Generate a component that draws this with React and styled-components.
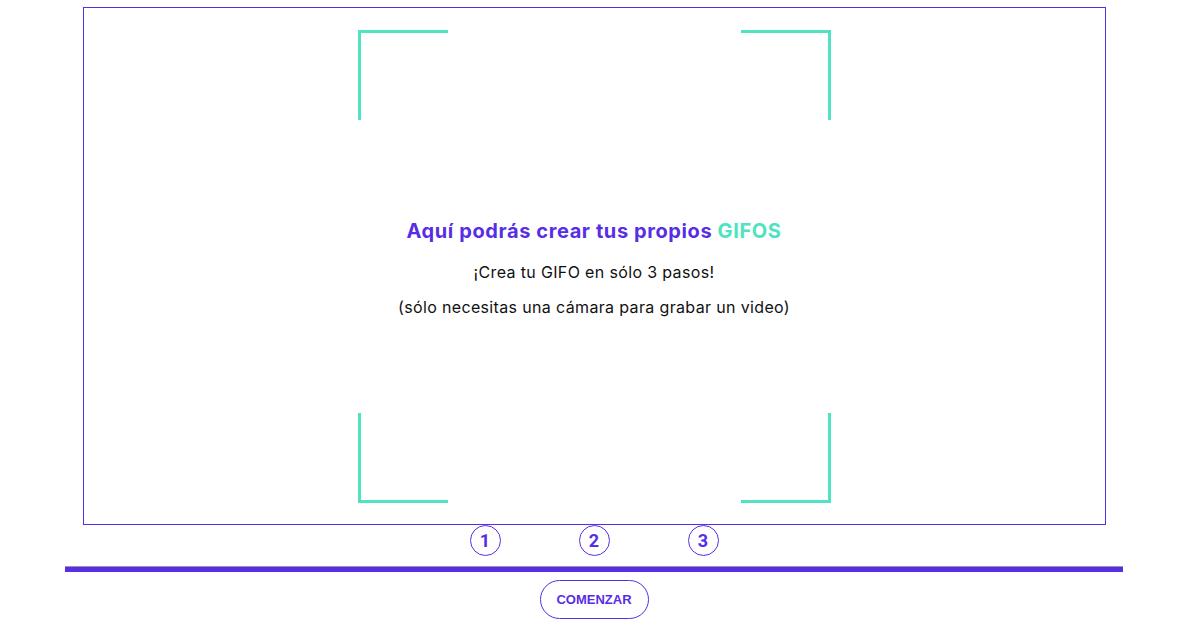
import React from "react";
import styled, { createGlobalStyle } from "styled-components";

const purple = "#572ee5";
const teal = "#50e3c2";

const Global = createGlobalStyle`
  body {
    margin: 0;
    background: #fff;
    font-family: "Liberation Sans", Arial, sans-serif;
  }
`;

const Page = styled.main`
  width: 1188px;
  display: flex;
  flex-direction: column;
  align-items: center;
`;

const Stage = styled.section`
  box-sizing: border-box;
  width: 1023px;
  height: 518px;
  margin-top: 7px;
  border: 1px solid ${purple};
  display: flex;
  align-items: center;
  justify-content: center;
`;

const Frame = styled.div`
  width: 473px;
  height: 473px;
  display: flex;
  flex-direction: column;
`;

const CornerRow = styled.div`
  display: flex;
  justify-content: space-between;
`;

const Corner = styled.span`
  box-sizing: border-box;
  width: 90px;
  height: 90px;
  border: 0 solid ${teal};
  border-${(p) => p.$v}-width: 3px;
  border-${(p) => p.$h}-width: 3px;
`;

const Intro = styled.div`
  flex: 1;
  display: flex;
  flex-direction: column;
  align-items: center;
  justify-content: center;
  padding-top: 4px;
  font-family: "Inter", "Open Sans", sans-serif;
  color: #111;
`;

const Title = styled.h1`
  margin: 0 0 18px;
  font-size: 20px;
  font-weight: 700;
  color: ${purple};
  letter-spacing: 0.6px;
  white-space: nowrap;
  span {
    color: ${teal};
  }
`;

const Line = styled.p`
  margin: 0 0 13px;
  font-size: 16px;
  font-weight: 400;
  line-height: 22px;
  letter-spacing: 0.35px;
  white-space: nowrap;
  &:last-child {
    margin-bottom: 0;
  }
`;

const Steps = styled.ol`
  list-style: none;
  margin: 0;
  padding: 0;
  height: 41px;
  display: flex;
  gap: 78px;
`;

const Step = styled.li`
  box-sizing: border-box;
  width: 31px;
  height: 31px;
  border: 1px solid ${purple};
  border-radius: 50%;
  display: flex;
  align-items: center;
  justify-content: center;
  font-family: Roboto, sans-serif;
  font-weight: 700;
  font-size: 18px;
  color: ${purple};
`;

const Bar = styled.hr`
  box-sizing: content-box;
  width: 1058px;
  height: 5px;
  margin: 0;
  border: 0;
  border-top: 1px solid #9a9a9a;
  background: ${purple};
`;

const Button = styled.button`
  margin-top: 8px;
  width: 109px;
  height: 39px;
  border: 1px solid ${purple};
  border-radius: 20px;
  background: #fff;
  color: ${purple};
  font-family: "Liberation Sans", Arial, sans-serif;
  font-weight: 700;
  font-size: 13px;
  cursor: pointer;
`;

export default function App() {
  return (
    <Page>
      <Global />
      <Stage>
        <Frame>
          <CornerRow>
            <Corner $v="top" $h="left" />
            <Corner $v="top" $h="right" />
          </CornerRow>
          <Intro>
            <Title>
              Aquí podrás crear tus propios <span>GIFOS</span>
            </Title>
            <Line>¡Crea tu GIFO en sólo 3 pasos!</Line>
            <Line>(sólo necesitas una cámara para grabar un video)</Line>
          </Intro>
          <CornerRow>
            <Corner $v="bottom" $h="left" />
            <Corner $v="bottom" $h="right" />
          </CornerRow>
        </Frame>
      </Stage>
      <Steps>
        {[1, 2, 3].map((n) => (
          <Step key={n}>{n}</Step>
        ))}
      </Steps>
      <Bar />
      <Button>COMENZAR</Button>
    </Page>
  );
}
